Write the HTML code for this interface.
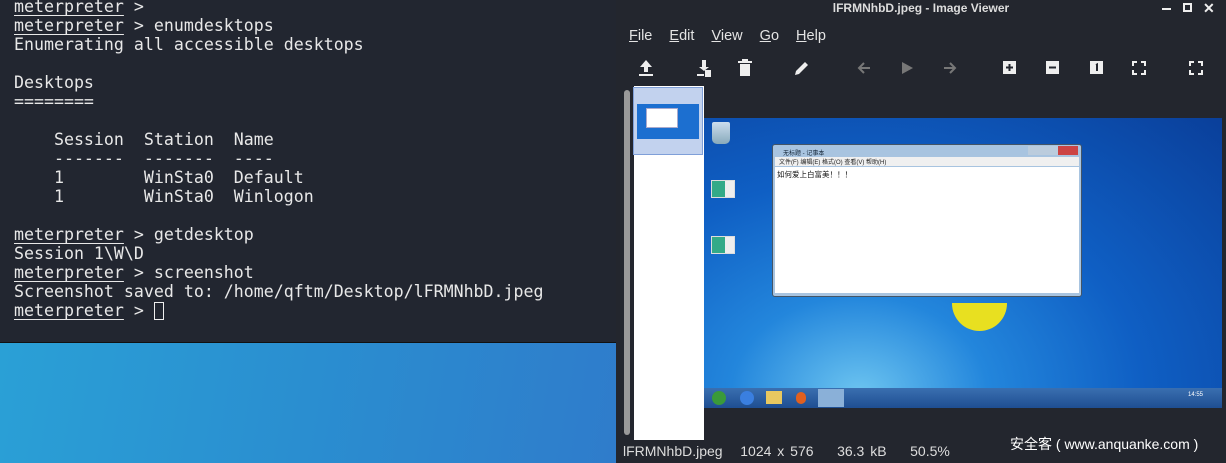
<!DOCTYPE html>
<html><head><meta charset="utf-8"><style>
*{margin:0;padding:0;box-sizing:border-box}
body{width:1226px;height:463px;overflow:hidden;position:relative;background:#2a7fc8;font-family:"Liberation Sans","Noto Sans CJK SC",sans-serif}
#desk{position:absolute;left:0;top:343px;width:616px;height:120px;background:linear-gradient(100deg,#2aa0d6 0%,#2a8ed0 50%,#2f7ccb 100%)}
#term{position:absolute;left:0;top:0;width:616px;height:343px;background:#222630;border-bottom:1px solid #111;overflow:hidden}
#term pre{position:absolute;left:14px;top:-3px;font-family:"DejaVu Sans Mono","Liberation Mono",monospace;font-size:16.6px;line-height:19px;color:#e8e8e8}
#term u{text-decoration:underline;text-underline-offset:3px}
.cur{display:inline-block;width:10px;height:18px;border:1px solid #eee;vertical-align:-4px}
#iv{position:absolute;left:616px;top:0;width:610px;height:463px;background:#23262e;color:#e6e6e6}
#title{position:absolute;top:0;left:0;width:610px;height:18px;text-align:center;font-size:12px;line-height:17px;font-weight:bold;color:#ddd}
#menu{position:absolute;top:28px;left:13px;font-size:14.5px;color:#e4e4e4}
#menu span{margin-right:13px}
#tb svg{position:absolute}
#strip{position:absolute;left:18px;top:86px;width:70px;height:354px;background:#fff}
#sb{position:absolute;left:8px;top:90px;width:6px;height:345px;background:#999;border-radius:3px}
#thumb{position:absolute;left:17px;top:87px;width:70px;height:68px;background:#c2d2ee;border:1px solid #7f9fd8}
#img{position:absolute;left:88px;top:118px;width:518px;height:290px;background:radial-gradient(ellipse at 30% 95%,#6cc4f0 0%,#2386dc 25%,#0f5fc4 55%,#0a3f9a 100%);overflow:hidden}
#status{position:absolute;left:7px;top:443px;font-size:14px;color:#ddd;word-spacing:2px}
</style></head><body>
<div id="desk"></div>
<div id="term"><pre><u>meterpreter</u> &gt;
<u>meterpreter</u> &gt; enumdesktops
Enumerating all accessible desktops

Desktops
========

    Session  Station  Name
    -------  -------  ----
    1        WinSta0  Default
    1        WinSta0  Winlogon

<u>meterpreter</u> &gt; getdesktop
Session 1\W\D
<u>meterpreter</u> &gt; screenshot
Screenshot saved to: /home/qftm/Desktop/lFRMNhbD.jpeg
<u>meterpreter</u> &gt; <span class="cur"></span></pre></div>
<div id="iv">
<div id="title">lFRMNhbD.jpeg - Image Viewer</div>
<div style="position:absolute;left:546px;top:8px;width:9px;height:2px;background:#eee"></div>
<div style="position:absolute;left:567px;top:3px;width:9px;height:9px;border:2px solid #eee"></div>
<div style="position:absolute;left:587px;top:0;font-size:14px;font-weight:bold;color:#eee">✕</div>
<div id="menu"><span><u>F</u>ile</span> <span><u>E</u>dit</span> <span><u>V</u>iew</span> <span><u>G</u>o</span> <span><u>H</u>elp</span></div>
<div id="tb">
<svg style="left:22px;top:59px" width="16" height="18"><path d="M8 1 L2 8 H6 V13 H10 V8 H14 Z" fill="#eee"/><rect x="1" y="15" width="14" height="2" fill="#eee"/></svg>
<svg style="left:80px;top:59px" width="16" height="18"><rect x="6" y="1" width="4" height="7" fill="#eee"/><path d="M3 8 H13 L8 12 Z" fill="#eee"/><rect x="1" y="15" width="7" height="2" fill="#eee"/><rect x="9" y="11" width="6" height="7" fill="#eee"/></svg>
<svg style="left:121px;top:59px" width="16" height="18"><rect x="1" y="2" width="14" height="2" fill="#eee"/><rect x="5" y="0" width="6" height="2" fill="#eee"/><rect x="3" y="5" width="10" height="12" fill="#eee"/></svg>
<svg style="left:177px;top:59px" width="18" height="18"><path d="M2 16 L3 12 L12 3 L15 6 L6 15 Z" fill="#eee"/></svg>
<svg style="left:240px;top:61px" width="16" height="14"><path d="M14 7 H3 M8 2 L3 7 L8 12" stroke="#777" stroke-width="2" fill="none"/></svg>
<svg style="left:284px;top:61px" width="14" height="14"><path d="M2 1 L13 7 L2 13 Z" fill="#777"/></svg>
<svg style="left:326px;top:61px" width="16" height="14"><path d="M2 7 H13 M8 2 L13 7 L8 12" stroke="#777" stroke-width="2" fill="none"/></svg>
<svg style="left:387px;top:61px" width="14" height="14"><rect width="13" height="13" fill="#eee"/><path d="M3 6.5 H10 M6.5 3 V10" stroke="#23262e" stroke-width="2"/></svg>
<svg style="left:430px;top:61px" width="14" height="14"><rect width="13" height="13" fill="#eee"/><path d="M3 6.5 H10" stroke="#23262e" stroke-width="2"/></svg>
<svg style="left:474px;top:61px" width="14" height="14"><rect width="13" height="13" fill="#eee"/><path d="M6 4 L7 3.5 V10" stroke="#23262e" stroke-width="2"/></svg>
<svg style="left:516px;top:61px" width="14" height="14"><path d="M1 5 V1 H5 M9 1 H13 V5 M13 9 V13 H9 M5 13 H1 V9" stroke="#eee" stroke-width="2" fill="none"/></svg>
<svg style="left:573px;top:61px" width="14" height="14"><path d="M1 5 V1 H5 M9 1 H13 V5 M13 9 V13 H9 M5 13 H1 V9" stroke="#eee" stroke-width="2" fill="none"/></svg>
</div>
<div id="sb"></div>
<div id="strip"></div>
<div id="thumb"><div style="position:absolute;left:3px;top:16px;width:62px;height:35px;background:#1c6fd0"><div style="position:absolute;left:9px;top:4px;width:32px;height:20px;background:#fff;border:1px solid #aac"></div></div></div>
<div id="img">
<div style="position:absolute;left:8px;top:4px;width:18px;height:22px;background:linear-gradient(#cde,#8ab);border-radius:2px 2px 5px 5px"></div>
<div style="position:absolute;left:7px;top:62px;width:24px;height:18px;background:linear-gradient(90deg,#3a8 60%,#eee 60%);border:1px solid #ddd"></div>
<div style="position:absolute;left:7px;top:118px;width:24px;height:18px;background:linear-gradient(90deg,#3a8 60%,#eee 60%);border:1px solid #ddd"></div>
<div style="position:absolute;left:248px;top:185px;width:55px;height:28px;background:#e8e020;border-radius:0 0 30px 30px"></div>
<div style="position:absolute;left:68px;top:26px;width:310px;height:153px;background:#a8c4e0;border:1px solid #456;border-radius:3px">
<div style="position:absolute;left:10px;top:3px;font-size:6px;color:#123">无标题 - 记事本</div>
<div style="position:absolute;right:3px;top:1px;width:50px;height:9px;background:linear-gradient(90deg,#bcd 0 60%,#c44 60%)"></div>
<div style="position:absolute;left:2px;top:12px;width:304px;height:9px;background:#f0f0f0;font-size:6px;color:#222;padding-left:4px">文件(F) 编辑(E) 格式(O) 查看(V) 帮助(H)</div>
<div style="position:absolute;left:2px;top:22px;width:304px;height:126px;background:#fff;font-size:7.5px;color:#111;padding:2px">如何爱上白富美！！！</div>
</div>
<div style="position:absolute;left:0;top:270px;width:518px;height:20px;background:linear-gradient(#3a6fb0,#1e4e92)"></div>
<div style="position:absolute;left:8px;top:273px;width:14px;height:14px;border-radius:7px;background:#3a9a3a"></div>
<div style="position:absolute;left:36px;top:273px;width:14px;height:14px;border-radius:7px;background:#3a7fe0"></div>
<div style="position:absolute;left:62px;top:273px;width:16px;height:13px;background:#e8c860"></div>
<div style="position:absolute;left:92px;top:274px;width:10px;height:12px;border-radius:5px;background:#e06020"></div>
<div style="position:absolute;left:114px;top:271px;width:26px;height:18px;background:#8ab0d8"></div>
<div style="position:absolute;left:484px;top:274px;font-size:6px;color:#fff">14:55</div>
</div>
<div id="status">lFRMNhbD.jpeg &nbsp; 1024 x 576 &nbsp;&nbsp; 36.3 kB &nbsp;&nbsp; 50.5%</div>
<div style="position:absolute;left:394px;top:434px;font-size:14px;color:#fff">安全客 ( www.anquanke.com )</div>
</div>
</body></html>
